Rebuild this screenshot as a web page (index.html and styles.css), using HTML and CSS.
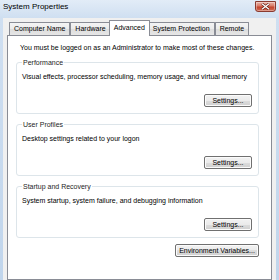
FILE: index.html
```html
<!DOCTYPE html>
<html lang="en">
<head>
    <meta charset="UTF-8">
    <title>System Properties</title>
    <link rel="stylesheet" href="styles.css">
</head>
<body>
    <div class="window">
        <div class="titlebar">
            <span class="title">System Properties</span>
            <button class="close" aria-label="Close">
                <svg width="11" height="7" viewBox="0 0 11 7"><path d="M2 0.8l7 5.4M9 0.8l-7 5.4" stroke="#5a1a12" stroke-width="2.6"/><path d="M2 0.8l7 5.4M9 0.8l-7 5.4" stroke="#fff" stroke-width="1.4"/></svg>
            </button>
        </div>

        <div class="client">
            <div class="tabs">
                <div class="tab">Computer Name</div>
                <div class="tab">Hardware</div>
                <div class="tab active">Advanced</div>
                <div class="tab">System Protection</div>
                <div class="tab">Remote</div>
            </div>

            <div class="page">
                <p class="note">You must be logged on as an Administrator to make most of these changes.</p>

                <fieldset class="group">
                    <legend>Performance</legend>
                    <p>Visual effects, processor scheduling, memory usage, and virtual memory</p>
                    <div class="actions"><button class="btn">Settings...</button></div>
                </fieldset>

                <fieldset class="group">
                    <legend>User Profiles</legend>
                    <p>Desktop settings related to your logon</p>
                    <div class="actions"><button class="btn">Settings...</button></div>
                </fieldset>

                <fieldset class="group">
                    <legend>Startup and Recovery</legend>
                    <p>System startup, system failure, and debugging information</p>
                    <div class="actions"><button class="btn">Settings...</button></div>
                </fieldset>

                <div class="actions env"><button class="btn wide">Environment Variables...</button></div>
            </div>
        </div>
    </div>
</body>
</html>
```

FILE: styles.css
```css
html, body { margin: 0; padding: 0; height: 100%; }
body { font-family: "Liberation Sans", Arial, sans-serif; font-size: 7px; color: #000; background: #c4d7ed; overflow: hidden; }

.window { height: 280px; padding: 0 3px; display: flex; flex-direction: column; background: linear-gradient(#e2ecf7, #cfdff1 18px, #c0d5ec); }
.titlebar { height: 18px; display: flex; justify-content: space-between; align-items: flex-start; }
.title { font-size: 8px; line-height: 10px; margin: 2px 0 0 0; color: #000; }
.close { width: 21px; height: 11px; margin-top: 1px; padding: 0; border: 1px solid #8a3a30; border-radius: 0 0 3px 3px; background: linear-gradient(#eab2a6, #d87a66 45%, #c4442e 55%, #cf6a52); display: flex; align-items: center; justify-content: center; box-shadow: inset 0 0 0 1px rgba(255,255,255,0.35); }

.client { flex: 1; background: #f0f0f0; padding: 2px 4px 0; display: flex; flex-direction: column; }

.tabs { height: 15px; padding-left: 2px; display: flex; align-items: flex-end; }
.tab { height: 13px; line-height: 12px; padding: 0 4px; box-sizing: border-box; border: 1px solid #898c95; border-bottom: none; border-radius: 1px 1px 0 0; background: linear-gradient(#f4f4f4, #ebebeb 50%, #dddddd 50%, #e6e6e6); white-space: nowrap; }
.tab.active { height: 16px; line-height: 14px; margin: 0 -2px -1px; position: relative; z-index: 1; background: #fff; }

.page { flex: 1; background: #fff; border: 1px solid #898c95; padding: 7px 12px 0 8px; }
.page p { margin: 0; line-height: 9px; white-space: nowrap; }
.page .note { margin: 0 0 6px 4px; }

.group { margin: 0 0 6px; padding: 5px 6px 6px 5px; border: 1px solid #dde5ea; border-radius: 3px; min-width: 0; }
.group legend { padding: 0 1px; line-height: 9px; color: #1e1e1e; }

.actions { display: flex; justify-content: flex-end; margin-top: 13px; }
.actions.env { margin-top: 5px; }

.btn { width: 48px; height: 13px; padding: 0; font: inherit; line-height: 11px; color: #000; border: 1px solid #707070; border-radius: 2px; background: linear-gradient(#f2f2f2, #ebebeb 50%, #dddddd 50%, #cfcfcf); box-shadow: inset 0 0 0 1px #fbfbfb; }
.btn.wide { width: 84px; }
```
